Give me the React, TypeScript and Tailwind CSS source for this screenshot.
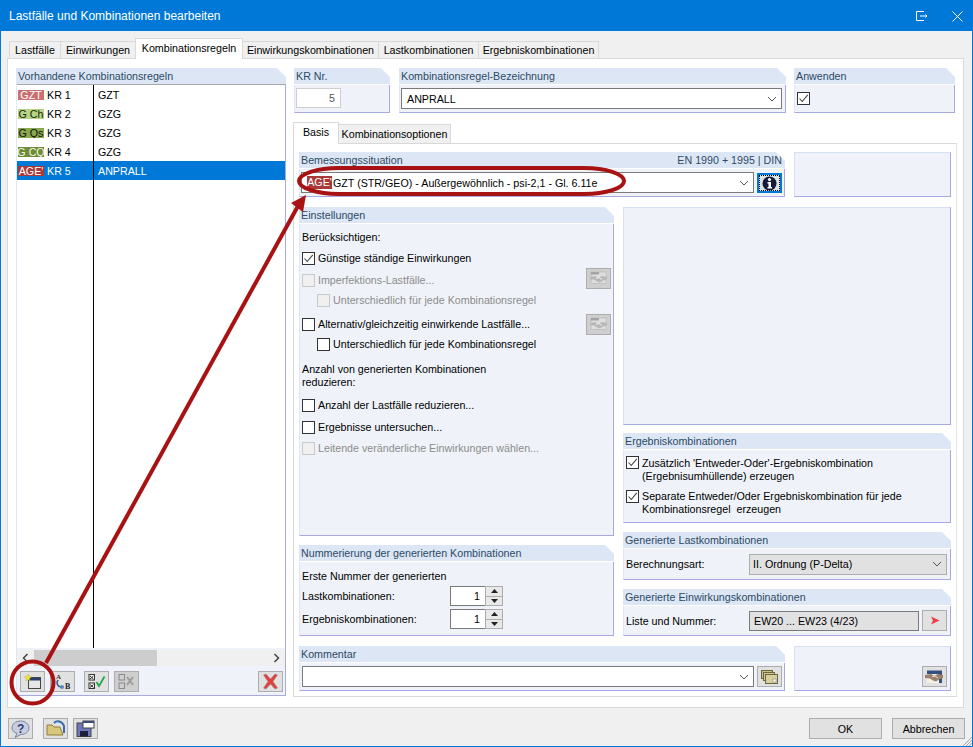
import React from "react";

const font = "[font-family:'Liberation_Sans',sans-serif]";

function Group({ title, right, className = "", bodyClass = "", children }: { title?: string; right?: string; className?: string; bodyClass?: string; children?: React.ReactNode }) {
  if (!title) {
    return <div className={`bg-[#eff3f9] border border-[#d5dff5] border-r-[#a9a9e2] border-b-[#a9a9e2] ${className}`}>{children}</div>;
  }
  return (
    <div className={`flex flex-col ${className}`}>
      <div className="relative h-[16px] shrink-0 bg-[#dce6f4] [clip-path:polygon(0_0,calc(100%-9px)_0,100%_9px,100%_100%,0_100%)] flex items-center justify-between pl-[2px] pr-[3px] text-[#2d4a66] leading-[16px] whitespace-nowrap">
        <span>{title}</span>
        {right && <span className="text-[#2d4a66]">{right}</span>}
      </div>
      <div className={`flex-1 min-h-0 mt-px bg-[#eff3f9] border-l border-l-[#dfe7f7] border-r border-r-[#a9a9e2] border-b border-b-[#a9a9e2] ${bodyClass}`}>{children}</div>
    </div>
  );
}

function Check({ checked, disabled }: { checked?: boolean; disabled?: boolean }) {
  return (
    <span className={`w-[13px] h-[13px] shrink-0 border flex items-center justify-center ${disabled ? "border-[#c8c8c8] bg-[#f0f0f0]" : "border-[#333] bg-white"}`}>
      {checked && (
        <svg width="11" height="11" viewBox="0 0 11 11"><path d="M1.5 5.5 L4.2 8.5 L9.8 1.8" fill="none" stroke="#444" strokeWidth="1.1" /></svg>
      )}
    </span>
  );
}

function CheckRow({ label, checked, disabled, className = "" }: { label: string; checked?: boolean; disabled?: boolean; className?: string }) {
  return (
    <div className={`flex items-center gap-[3px] h-[16px] whitespace-nowrap ${disabled ? "text-[#8c8c8c]" : "text-black"} ${className}`}>
      <Check checked={checked} disabled={disabled} />
      <span>{label}</span>
    </div>
  );
}

function Chevron({ color = "#555" }: { color?: string }) {
  return (
    <svg width="10" height="6" viewBox="0 0 10 6"><path d="M1 1 L5 5 L9 1" fill="none" stroke={color} strokeWidth="1" /></svg>
  );
}

function IconBtn({ children, className = "" }: { children?: React.ReactNode; className?: string }) {
  return <div className={`w-[25px] h-[21px] shrink-0 bg-[#e1e1e1] border border-[#adadad] flex items-center justify-center ${className}`}>{children}</div>;
}

function Handshake({ dim }: { dim?: boolean }) {
  if (dim) {
    return (
      <svg width="19" height="14" viewBox="0 0 19 14">
        <rect x="2" y="1" width="15" height="11.5" fill="#dedede" stroke="#b4b4b4" strokeWidth="0.6" />
        <rect x="2" y="1" width="8" height="2.5" fill="#a4a4a4" />
        <path d="M1 6 L6 5 L9 7 L13 5 L18 6 L18 8.5 L14 9.5 L11 11.5 L8 10.5 L5 8.5 L1 8.5 Z" fill="#b8b8b8" />
        <path d="M7 7.5 L10 6.5 L13 8.5" fill="none" stroke="#ececec" />
      </svg>
    );
  }
  return (
    <svg width="19" height="14" viewBox="0 0 19 14">
      <rect x="2" y="0.5" width="15" height="3.5" fill="#33507f" />
      <rect x="2" y="4" width="15" height="9" fill="#f4f1e6" />
      <rect x="14" y="2" width="3" height="11" fill="#33507f" />
      <path d="M0 5 L6 4 L9 6 L13 4 L18 5 L18 8 L14 9.5 L11 11.5 L8 10.5 L5 8.5 L0 8 Z" fill="#9a7f6c" />
      <path d="M7 7 L10 6 L13 8" fill="none" stroke="#e6d8c6" />
    </svg>
  );
}

function Badge({ text, bg, fg }: { text: string; bg: string; fg: string }) {
  return <span className="w-[26px] h-[10px] shrink-0 overflow-hidden flex items-center justify-center leading-[10px] whitespace-nowrap" style={{ background: bg, color: fg }}>{text}</span>;
}

const rows = [
  { badge: "GZT", bg: "#cb6f6f", fg: "#fff", kr: "KR 1", name: "GZT" },
  { badge: "G Ch", bg: "#b5d488", fg: "#1a2a00", kr: "KR 2", name: "GZG" },
  { badge: "G Qs", bg: "#8aa84c", fg: "#111", kr: "KR 3", name: "GZG" },
  { badge: "G CQ", bg: "#6f8c36", fg: "#f2f6e6", kr: "KR 4", name: "GZG" },
  { badge: "AGE'", bg: "#a93a3a", fg: "#fff", kr: "KR 5", name: "ANPRALL", sel: true },
];

const Tab = ({ label, active, className = "" }: { label: string; active?: boolean; className?: string }) => (
  <div className={`border border-[#d9d9d9] border-b-0 whitespace-nowrap flex items-center justify-center ${active ? "h-[21px] bg-white -mb-px relative z-10 pb-[3px]" : "h-[17px] bg-[#f0f0f0]"} ${className}`}>{label}</div>
);

export default function App() {
  return (
    <div className={`relative w-[973px] h-[747px] overflow-hidden bg-[#f0f0f0] border border-[#0078d7] flex flex-col text-[10.7px] leading-[16px] text-black ${font}`}>
      {/* Title bar */}
      <div className="h-[30px] shrink-0 bg-[#0078d7] flex items-center justify-between pl-[8px] pr-[9px] text-white text-[12px]">
        <span>Lastfälle und Kombinationen bearbeiten</span>
        <div className="flex items-center gap-[24px]">
          <svg width="12" height="11" viewBox="0 0 12 11"><path d="M8 0.5 H0.5 V9.5 H8 M4 5 H11 M9.5 3.5 L11 5 L9.5 6.5" fill="none" stroke="#fff" /></svg>
          <svg width="11" height="11" viewBox="0 0 11 11"><path d="M0.5 0.5 L10.5 10.5 M10.5 0.5 L0.5 10.5" stroke="#fff" strokeWidth="1" /></svg>
        </div>
      </div>

      {/* Tabs */}
      <div className="mt-[8px] pl-[8px] flex items-end h-[19px] shrink-0">
        <Tab label="Lastfälle" className="w-[52px]" />
        <Tab label="Einwirkungen" className="w-[76px] -ml-px" />
        <Tab label="Kombinationsregeln" active className="w-[108px] -ml-px" />
        <Tab label="Einwirkungskombinationen" className="w-[137px] -ml-px" />
        <Tab label="Lastkombinationen" className="w-[101px] -ml-px" />
        <Tab label="Ergebniskombinationen" className="w-[121px] -ml-px" />
      </div>

      {/* Main tab panel */}
      <div className="ml-[6px] w-[957px] h-[650px] shrink-0 bg-white border border-[#d9d9d9] pt-[9px] pl-[8px] flex gap-[8px]">
        {/* Left */}
        <Group title="Vorhandene Kombinationsregeln" className="w-[270px] h-[628px]" bodyClass="flex flex-col !mt-0">
          <div className="flex-1 bg-white border-t border-t-[#a8a8a8] relative flex flex-col">
            <div className="absolute left-[76px] top-0 bottom-0 w-px bg-black z-10" />
            {rows.map((r) => (
              <div key={r.kr} className={`h-[19px] flex items-center pl-[1px] ${r.sel ? "bg-[#0078d7] text-white" : ""}`}>
                <Badge text={r.badge} bg={r.bg} fg={r.fg} />
                <span className="w-[49px] pl-[3px]">{r.kr}</span>
                <span className="pl-[5px]">{r.name}</span>
              </div>
            ))}
          </div>
          {/* scrollbar */}
          <div className="h-[16px] mt-[2px] shrink-0 bg-[#f0f0f0] flex items-center">
            <div className="w-[17px] flex justify-center"><svg width="7" height="10" viewBox="0 0 7 10"><path d="M5.5 1 L1.5 5 L5.5 9" fill="none" stroke="#444" strokeWidth="1.5" /></svg></div>
            <div className="w-[123px] h-full bg-[#cdcdcd]" />
            <div className="flex-1" />
            <div className="w-[17px] flex justify-center"><svg width="7" height="10" viewBox="0 0 7 10"><path d="M1.5 1 L5.5 5 L1.5 9" fill="none" stroke="#444" strokeWidth="1.5" /></svg></div>
          </div>
          <div className="h-[29px] shrink-0 flex items-center pl-[3px] pr-[2px] pt-[2px]">
            <IconBtn>
              <svg width="17" height="15" viewBox="0 0 17 15"><rect x="4.5" y="3.5" width="12" height="11" fill="#e6e6e6" stroke="#444" /><rect x="5" y="4" width="11" height="2.5" fill="#27406f" /><path d="M4 0 L5 2.5 L7.5 3 L5.3 4.5 L6 7 L4 5.5 L2 7 L2.7 4.5 L0.5 3 L3 2.5 Z" fill="#f7e83c" stroke="#b8a420" strokeWidth="0.4" /></svg>
            </IconBtn>
            <IconBtn className="ml-[5px]">
              <svg width="20" height="18" viewBox="0 0 20 18"><path d="M5 7 C3 10 4 13 8 14" fill="none" stroke="#2f5d9c" strokeWidth="1.6" /><circle cx="9" cy="14" r="2" fill="#5b86c4" /><text x="3" y="6" fontSize="7" fontWeight="bold" fill="#333" fontFamily="Liberation Serif">A</text><text x="12" y="16" fontSize="8" fontWeight="bold" fill="#222" fontFamily="Liberation Serif">B</text></svg>
            </IconBtn>
            <IconBtn className="ml-[9px]">
              <svg width="18" height="17" viewBox="0 0 18 17"><rect x="1" y="1.5" width="5.5" height="5.5" fill="#fff" stroke="#333" /><rect x="1" y="10" width="5.5" height="5.5" fill="#fff" stroke="#333" /><path d="M2 3 L5.5 6 M5.5 3 L2 6 M2 11.5 L5.5 14.5 M5.5 11.5 L2 14.5" stroke="#222" /><path d="M8.5 9 L11 13 L16.5 3.5" fill="none" stroke="#24a84a" strokeWidth="1.8" /></svg>
            </IconBtn>
            <IconBtn className="ml-[5px] !bg-[#cfcfcf]">
              <svg width="18" height="17" viewBox="0 0 18 17"><rect x="1" y="1.5" width="5.5" height="5.5" fill="none" stroke="#8a8a8a" /><rect x="1" y="10" width="5.5" height="5.5" fill="none" stroke="#8a8a8a" /><path d="M9 4 L15 12 M15 4 L9 12" stroke="#9c9c9c" strokeWidth="2" /></svg>
            </IconBtn>
            <div className="flex-1" />
            <IconBtn>
              <svg width="17" height="17" viewBox="0 0 17 17"><path d="M1.5 2 L4 1 L8.5 6 L13 1 L15.5 2 L11 8.5 L15.5 15 L13 16 L8.5 11 L4 16 L1.5 15 L6 8.5 Z" fill="#e2403d" stroke="#9a8a8a" strokeWidth="0.6" /></svg>
            </IconBtn>
          </div>
        </Group>

        {/* Right */}
        <div className="w-[662px] flex flex-col">
          {/* Top row */}
          <div className="flex h-[45px] shrink-0">
            <Group title="KR Nr." className="w-[96px]" bodyClass="pt-[3px] pl-[1px]">
              <div className="w-[45px] h-[20px] bg-white border border-[#cfcfcf] flex items-center justify-end pr-[5px] text-[#555]">5</div>
            </Group>
            <Group title="Kombinationsregel-Bezeichnung" className="w-[387px] ml-[9px]" bodyClass="pt-[3px] pl-[1px]">
              <div className="w-[381px] h-[21px] bg-white border border-[#7a7a7a] flex items-center justify-between pl-[5px] pr-[4px]">
                <span>ANPRALL</span><Chevron />
              </div>
            </Group>
            <Group title="Anwenden" className="w-[161px] ml-[8px]" bodyClass="pt-[7px] pl-[2px]">
              <Check checked />
            </Group>
          </div>

          {/* Sub tabs */}
          <div className="mt-[10px] -ml-px flex items-end h-[20px] shrink-0">
            <Tab label="Basis" active className="w-[46px] !h-[22px]" />
            <Tab label="Kombinationsoptionen" className="w-[113px] -ml-px !h-[19px]" />
          </div>

          {/* Sub tab panel */}
          <div className="-ml-px w-[664px] h-[554px] border border-[#d9d9d9] border-r-[#e4e4e4] pt-[8px] pl-[5px] flex flex-col">
            <div className="flex h-[45px] shrink-0">
              <Group title="Bemessungssituation" right="EN 1990 + 1995 | DIN" className="w-[486px]" bodyClass="pt-[3px] pl-[1px] flex">
                <div className="w-[453px] h-[21px] bg-white border border-[#7a7a7a] flex items-center justify-between pl-[5px] pr-[4px]">
                  <span className="flex items-center gap-px">
                    <span className="bg-[#a93a3a] text-white h-[13px] leading-[13px] w-[25px] text-center">AGE'</span>
                    <span>GZT (STR/GEO) - Außergewöhnlich - psi-2,1 - Gl. 6.11e</span>
                  </span>
                  <Chevron />
                </div>
                <div className="w-[25px] h-[20px] mt-px ml-[3px] bg-[#0078d7] p-[2px]">
                  <div className="w-full h-full bg-[#e1e1e1] border border-dotted border-black flex items-center justify-center">
                    <svg width="15" height="15" viewBox="0 0 15 15"><circle cx="7.5" cy="7.5" r="7" fill="#141a3c" /><circle cx="7.5" cy="3.6" r="1.6" fill="#fff" /><path d="M5.5 6 H9 V11 H10 V12.5 H5.5 V11 H6.5 V7.5 H5.5 Z" fill="#fff" /></svg>
                  </div>
                </div>
              </Group>
              <Group className="w-[157px] ml-[9px]" />
            </div>

            <div className="mt-[10px] flex gap-[9px] flex-1 min-h-0">
              {/* Left column */}
              <div className="w-[315px] flex flex-col">
                <Group title="Einstellungen" className="h-[329px] shrink-0" bodyClass="pl-[2px] relative">
                  <div className="pt-[5px]">Berücksichtigen:</div>
                  <div className="mt-[5px]"><CheckRow label="Günstige ständige Einwirkungen" checked /></div>
                  <div className="mt-[6px] flex items-center justify-between pr-[2px]">
                    <CheckRow label="Imperfektions-Lastfälle..." disabled />
                    <IconBtn className="!bg-[#cfcfcf] -my-[3px] -translate-y-[2px]"><Handshake dim /></IconBtn>
                  </div>
                  <div className="mt-[4px] ml-[15px]"><CheckRow label="Unterschiedlich für jede Kombinationsregel" disabled /></div>
                  <div className="mt-[8px] flex items-center justify-between pr-[2px]">
                    <CheckRow label="Alternativ/gleichzeitig einwirkende Lastfälle..." />
                    <IconBtn className="!bg-[#cfcfcf] -my-[3px]"><Handshake dim /></IconBtn>
                  </div>
                  <div className="mt-[4px] ml-[15px]"><CheckRow label="Unterschiedlich für jede Kombinationsregel" /></div>
                  <div className="mt-[11px] leading-[13px]">Anzahl von generierten Kombinationen<br />reduzieren:</div>
                  <div className="mt-[8px]"><CheckRow label="Anzahl der Lastfälle reduzieren..." /></div>
                  <div className="mt-[6px]"><CheckRow label="Ergebnisse untersuchen..." /></div>
                  <div className="mt-[5px]"><CheckRow label="Leitende veränderliche Einwirkungen wählen..." disabled /></div>
                </Group>
                <Group title="Nummerierung der generierten Kombinationen" className="mt-[9px] h-[91px] shrink-0" bodyClass="pl-[2px]">
                  <div className="pt-[6px]">Erste Nummer der generierten</div>
                  {["Lastkombinationen:", "Ergebniskombinationen:"].map((l, i) => (
                    <div key={l} className={`flex items-center h-[20px] ${i === 0 ? "mt-[2px]" : "mt-[3px]"}`}>
                      <span className="w-[148px]">{l}</span>
                      <div className="w-[35px] h-[20px] bg-white border border-[#7a7a7a] border-r-0 flex items-center justify-end pr-[5px]">1</div>
                      <div className="w-[18px] h-[20px] border border-[#adadad] flex flex-col">
                        <div className="flex-1 bg-[#e8e8e8] flex items-center justify-center border-b border-[#adadad]"><svg width="7" height="4" viewBox="0 0 7 4"><path d="M3.5 0 L7 4 H0 Z" fill="#222" /></svg></div>
                        <div className="flex-1 bg-[#e8e8e8] flex items-center justify-center"><svg width="7" height="4" viewBox="0 0 7 4"><path d="M0 0 H7 L3.5 4 Z" fill="#222" /></svg></div>
                      </div>
                    </div>
                  ))}
                </Group>
              </div>

              {/* Right column */}
              <div className="w-[328px] flex flex-col">
                <Group className="h-[218px] shrink-0" />
                <Group title="Ergebniskombinationen" className="mt-[8px] h-[90px] shrink-0" bodyClass="pl-[2px]">
                  <div className="pt-[3px] flex gap-[3px]"><div className="pt-[3px]"><Check checked /></div><div className="leading-[13px] pt-[4px]">Zusätzlich 'Entweder-Oder'-Ergebniskombination<br />(Ergebnisumhüllende) erzeugen</div></div>
                  <div className="pt-[4px] flex gap-[3px]"><div className="pt-[3px]"><Check checked /></div><div className="leading-[13px] pt-[3px]">Separate Entweder/Oder Ergebniskombination für jede<br />Kombinationsregel&nbsp; erzeugen</div></div>
                </Group>
                <Group title="Generierte Lastkombinationen" className="mt-[9px] h-[48px] shrink-0" bodyClass="pl-[2px] flex items-center">
                  <span className="w-[123px]">Berechnungsart:</span>
                  <div className="w-[198px] h-[21px] bg-[#e1e1e1] border border-[#adadad] flex items-center justify-between pl-[3px] pr-[4px]">
                    <span>II. Ordnung (P-Delta)</span><Chevron />
                  </div>
                </Group>
                <Group title="Generierte Einwirkungskombinationen" className="mt-[9px] h-[47px] shrink-0" bodyClass="pl-[2px] flex items-center">
                  <span className="w-[123px]">Liste und Nummer:</span>
                  <div className="w-[170px] h-[20px] bg-[#e1e1e1] border border-[#7a7a7a] flex items-center pl-[4px]">EW20 ... EW23 (4/23)</div>
                  <IconBtn className="ml-[3px]"><svg width="10" height="9" viewBox="0 0 10 9"><path d="M1 0.5 L9.5 4.5 L1 8.5 L3 4.5 Z" fill="#ef3a4a" /></svg></IconBtn>
                </Group>
              </div>
            </div>

            <div className="flex h-[45px] shrink-0 mt-[9px] mb-[5px]">
              <Group title="Kommentar" className="w-[486px]" bodyClass="pt-[3px] pl-[2px] flex">
                <div className="w-[452px] h-[21px] bg-white border border-[#7a7a7a] flex items-center justify-end pr-[4px]"><Chevron /></div>
                <IconBtn className="ml-[3px]">
                  <svg width="17" height="14" viewBox="0 0 17 14"><rect x="0.5" y="0.5" width="11" height="8" fill="#c9bd86" stroke="#6d6540" /><rect x="2.5" y="2.5" width="11" height="8" fill="#d4c994" stroke="#6d6540" /><rect x="4.5" y="4.5" width="12" height="9" fill="#d8cf9f" stroke="#6d6540" /><rect x="12" y="9" width="3" height="3" fill="#fff" stroke="#777" strokeWidth="0.5" /></svg>
                </IconBtn>
              </Group>
              <Group className="w-[157px] ml-[9px] flex items-end justify-end pr-[3px] pb-[3px]">
                <IconBtn><Handshake /></IconBtn>
              </Group>
            </div>
          </div>
        </div>
      </div>

      {/* Footer */}
      <div className="flex items-center h-[21px] mt-[10px] shrink-0 pl-[7px] pr-[7px]">
        <IconBtn>
          <svg width="19" height="18" viewBox="0 0 19 18"><path d="M9.5 1 C14.5 1 18 4 18 8 C18 12 14.5 14.5 10 14.5 L4 17.5 L6 13.5 C3 12.5 1 10.5 1 8 C1 4 4.5 1 9.5 1 Z" fill="#c9cede" stroke="#7c86a0" /><text x="6" y="12.5" fontSize="12" fontWeight="bold" fill="#2a3f7a" fontFamily="Liberation Sans">?</text></svg>
        </IconBtn>
        <IconBtn className="ml-[10px]">
          <svg width="20" height="17" viewBox="0 0 20 17"><path d="M8 3 C11 0 16 1 18 6 L18 13" fill="none" stroke="#3a6db0" strokeWidth="2" /><path d="M1 5 H6 L8 7 H14 L17 15 H1 Z" fill="#d8c67a" stroke="#8d7d3a" /></svg>
        </IconBtn>
        <IconBtn className="ml-[5px]">
          <svg width="19" height="17" viewBox="0 0 19 17"><rect x="1" y="3" width="14" height="13.5" fill="#6f78bb" stroke="#444" /><rect x="4" y="11" width="8" height="5.5" fill="#1e1e3a" /><rect x="7" y="1" width="11" height="7" fill="#fff" stroke="#444" /><rect x="7" y="1" width="11" height="2" fill="#3a4a7a" /></svg>
        </IconBtn>
        <div className="flex-1" />
        <div className="w-[73px] h-[21px] bg-[#e1e1e1] border border-[#adadad] flex items-center justify-center">OK</div>
        <div className="w-[73px] h-[21px] ml-[10px] bg-[#e1e1e1] border border-[#adadad] flex items-center justify-center">Abbrechen</div>
      </div>

      {/* Resize grip */}
      <svg className="absolute right-0 bottom-0" width="10" height="10" viewBox="0 0 10 10"><path d="M10 1 L1 10 M10 4 L4 10 M10 7 L7 10" stroke="#a8a8a8" /></svg>

      {/* Annotation overlay */}
      <svg className="absolute left-[-1px] top-[-1px] pointer-events-none z-20" width="973" height="747" viewBox="0 0 973 747">
        <rect x="299" y="168" width="325" height="26" rx="40" ry="13" fill="none" stroke="#a81212" strokeWidth="4" />
        <circle cx="32.5" cy="682.5" r="21" fill="none" stroke="#a81212" strokeWidth="4" />
        <path d="M46 663 L298 206" stroke="#a81212" strokeWidth="4" />
        <path d="M306 195 L291 203 L303 212 Z" fill="#a81212" />
      </svg>
    </div>
  );
}
